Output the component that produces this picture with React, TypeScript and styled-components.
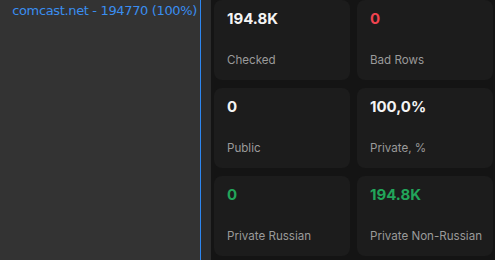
import React from "react";
import styled, { createGlobalStyle } from "styled-components";

const Global = createGlobalStyle`
  html, body { margin: 0; padding: 0; background: #141414; }
  body { width: 495px; height: 260px; overflow: hidden; }
`;

const Page = styled.div`
  display: flex;
  width: 495px;
  height: 260px;
  background: #141414;
  overflow: hidden;
`;

const Sidebar = styled.div`
  width: 200px;
  height: 100%;
  background: #333333;
  border-right: 1px solid #2d86f0;
  box-sizing: content-box;
  display: flex;
  flex-direction: column;
  align-items: flex-end;
`;

const SideTitle = styled.div`
  font-family: "DejaVu Sans", Verdana, sans-serif;
  font-size: 13px;
  line-height: 16px;
  color: #3a8ef0;
  padding: 3px 3px 0 0;
  white-space: nowrap;
  letter-spacing: -0.35px;
`;

const Gutter = styled.div`
  width: 10px;
  height: 100%;
  background: #2b2b2b;
`;

const Grid = styled.div`
  display: grid;
  grid-template-columns: 136px 136px;
  grid-template-rows: 80px 80px 80px;
  column-gap: 7px;
  row-gap: 8px;
  padding: 0 0 0 3px;
`;

const Card = styled.div`
  box-sizing: border-box;
  background: #1c1c1c;
  border-radius: 8px;
  padding: 10px 13px 0 13px;
  display: flex;
  flex-direction: column;
  font-family: Inter, "Noto Sans", sans-serif;
`;

const Value = styled.div<{ $tone?: "red" | "green" }>`
  font-size: 15px;
  font-weight: 700;
  line-height: 18px;
  color: ${(p) => (p.$tone === "red" ? "#f0434f" : p.$tone === "green" ? "#22a55a" : "#f4f4f4")};
`;

const Label = styled.div`
  margin-top: 24px;
  font-size: 11.6px;
  line-height: 16px;
  color: #9a9a9a;
  white-space: nowrap;
`;

const stats: { value: string; label: string; tone?: "red" | "green" }[] = [
  { value: "194.8K", label: "Checked" },
  { value: "0", label: "Bad Rows", tone: "red" },
  { value: "0", label: "Public" },
  { value: "100,0%", label: "Private, %" },
  { value: "0", label: "Private Russian", tone: "green" },
  { value: "194.8K", label: "Private Non-Russian", tone: "green" },
];

export default function App() {
  return (
    <>
      <Global />
      <Page>
        <Sidebar>
          <SideTitle>comcast.net - 194770 (100%)</SideTitle>
        </Sidebar>
        <Gutter />
        <Grid>
          {stats.map((s) => (
            <Card key={s.label}>
              <Value $tone={s.tone}>{s.value}</Value>
              <Label>{s.label}</Label>
            </Card>
          ))}
        </Grid>
      </Page>
    </>
  );
}
